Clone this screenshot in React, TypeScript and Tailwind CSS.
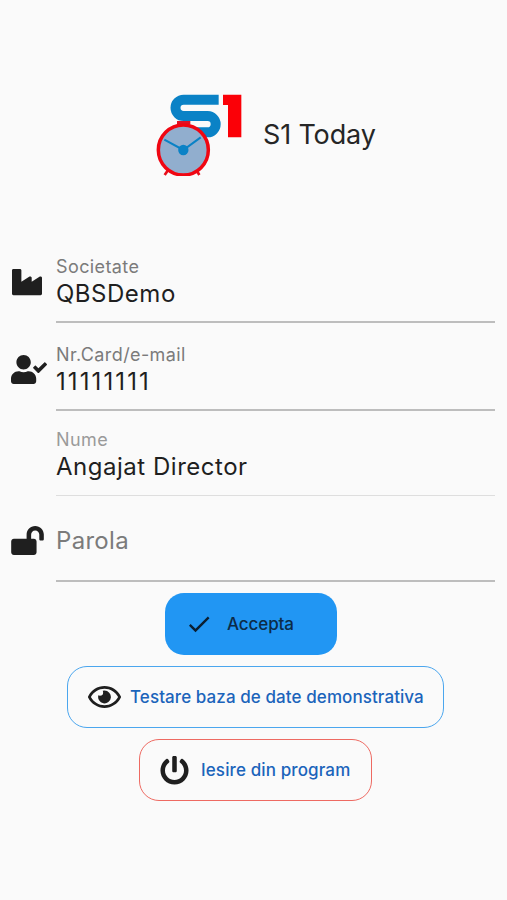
import { ReactNode } from "react"
import { FaIndustry, FaLockOpen, FaPowerOff, FaRegEye, FaUserCheck } from "react-icons/fa"
import { MdCheck } from "react-icons/md"
import { clsx } from "clsx"

type TField = {
    label: string
    value?: string
    icon?: ReactNode
    disabled?: boolean
    numeric?: boolean
    className: string
}

function Logo() {
    return (
        <svg width="87" height="83" viewBox="45 39 261 249" fill="none">
            <path d="M236 59H131a24.5 24.5 0 0 0 0 49h72a24.500 24.500 0 0 1 24 24.500a24.500 24.500 0 0 1 -24 24.500H165" stroke="#0a82c6" strokeWidth="30" />
            <path d="M249 44H304V172H264V75H249Z" fill="#fb0007" />
            <path d="M111 123H151V133H142V140H120V133H111Z" fill="#e01226" />
            <path d="M87 266L74 285M167 266L178 285" stroke="#e8101c" strokeWidth="8" />
            <circle cx="130" cy="210" r="75" fill="#91aece" stroke="#f00612" strokeWidth="10.500" />
            <path d="M73 179L130 210L182 172" stroke="#0a82c6" strokeWidth="6" />
            <circle cx="130" cy="210" r="15.500" fill="#0a82c6" />
        </svg>
    )
}

function Field({ label, value, icon, disabled, numeric, className }: TField) {
    return (
        <div className={clsx("flex pl-[11px] pr-3", className)}>
            <div className="flex w-[45px] shrink-0 items-center text-[30px] text-[#1f1f1f]">{icon}</div>
            <div className={clsx("flex flex-1 flex-col", disabled ? "border-b border-[#dedede]" : "border-b-2 border-[#bdbdbd]")}>
                {value ? (
                    <>
                        <span className={clsx("text-[18px] leading-[22px] tracking-[0.4px]", disabled ? "text-[#9a9a9a]" : "pt-px text-[#7b7b7b]")}>{label}</span>
                        <span className={clsx("text-[24px] leading-8 text-[#1f1f1f]", numeric ? "tracking-[2.1px]" : "tracking-[0.52px]")}>{value}</span>
                    </>
                ) : (
                    <span className="mt-[25px] text-[24px] leading-8 tracking-[0.3px] text-[#7b7b7b]">{label}</span>
                )}
            </div>
        </div>
    )
}

export default function App() {
    return (
        <div className="flex h-[900px] w-[507px] flex-col overflow-hidden bg-[#fafafa] font-['Inter','Liberation_Sans',sans-serif]">
            <header className="flex h-[255px] pt-[93px] pl-[155px]">
                <Logo />
                <h1 className="mt-[26px] ml-[21px] text-[27px] leading-8 tracking-[-0.15px] text-[#262626]">S1 Today</h1>
            </header>

            <Field label="Societate" value="QBSDemo" icon={<FaIndustry className="mb-[15px] ml-[1px]" />} className="h-[68px]" />
            <Field label="Nr.Card/e-mail" value="11111111" numeric icon={<FaUserCheck className="mb-[15px] h-[29px] w-[36px]" />} className="mt-5 h-[68px]" />
            <Field label="Nume" value="Angajat Director" disabled className="mt-[18px] h-[67px]" />
            <Field label="Parola" icon={<FaLockOpen className="mb-[2px] h-[29px] w-[33px]" />} className="mt-[4px] h-[82px]" />

            <div className="mt-[11px] flex flex-col items-center gap-[11px] text-[17px] font-medium">
                <button className="mr-[5px] flex h-[62px] w-[172px] items-center rounded-[19px] bg-[#2196f3] pl-[20px] text-[#0c2b47]">
                    <MdCheck className="size-[28px] text-[#0b1f31]" />
                    <span className="mt-px ml-[14px] tracking-[-0.1px]">Accepta</span>
                </button>
                <button className="ml-[4px] flex h-[62px] w-[377px] items-center rounded-[20px] border border-[#4ba6ee] pl-[20px] text-[#1b64bb]">
                    <FaRegEye className="h-[30px] w-[33px] text-[#1f1f1f]" />
                    <span className="mt-px ml-[9px] tracking-[0.08px] whitespace-nowrap">Testare baza de date demonstrativa</span>
                </button>
                <button className="ml-[4px] flex h-[62px] w-[233px] items-center rounded-[20px] border border-[#ee6a62] pl-[20px] text-[#1b64bb]">
                    <FaPowerOff className="size-[29px] text-[#1f1f1f]" />
                    <span className="mt-px ml-[12px] tracking-[0.12px] whitespace-nowrap">Iesire din program</span>
                </button>
            </div>
        </div>
    )
}
